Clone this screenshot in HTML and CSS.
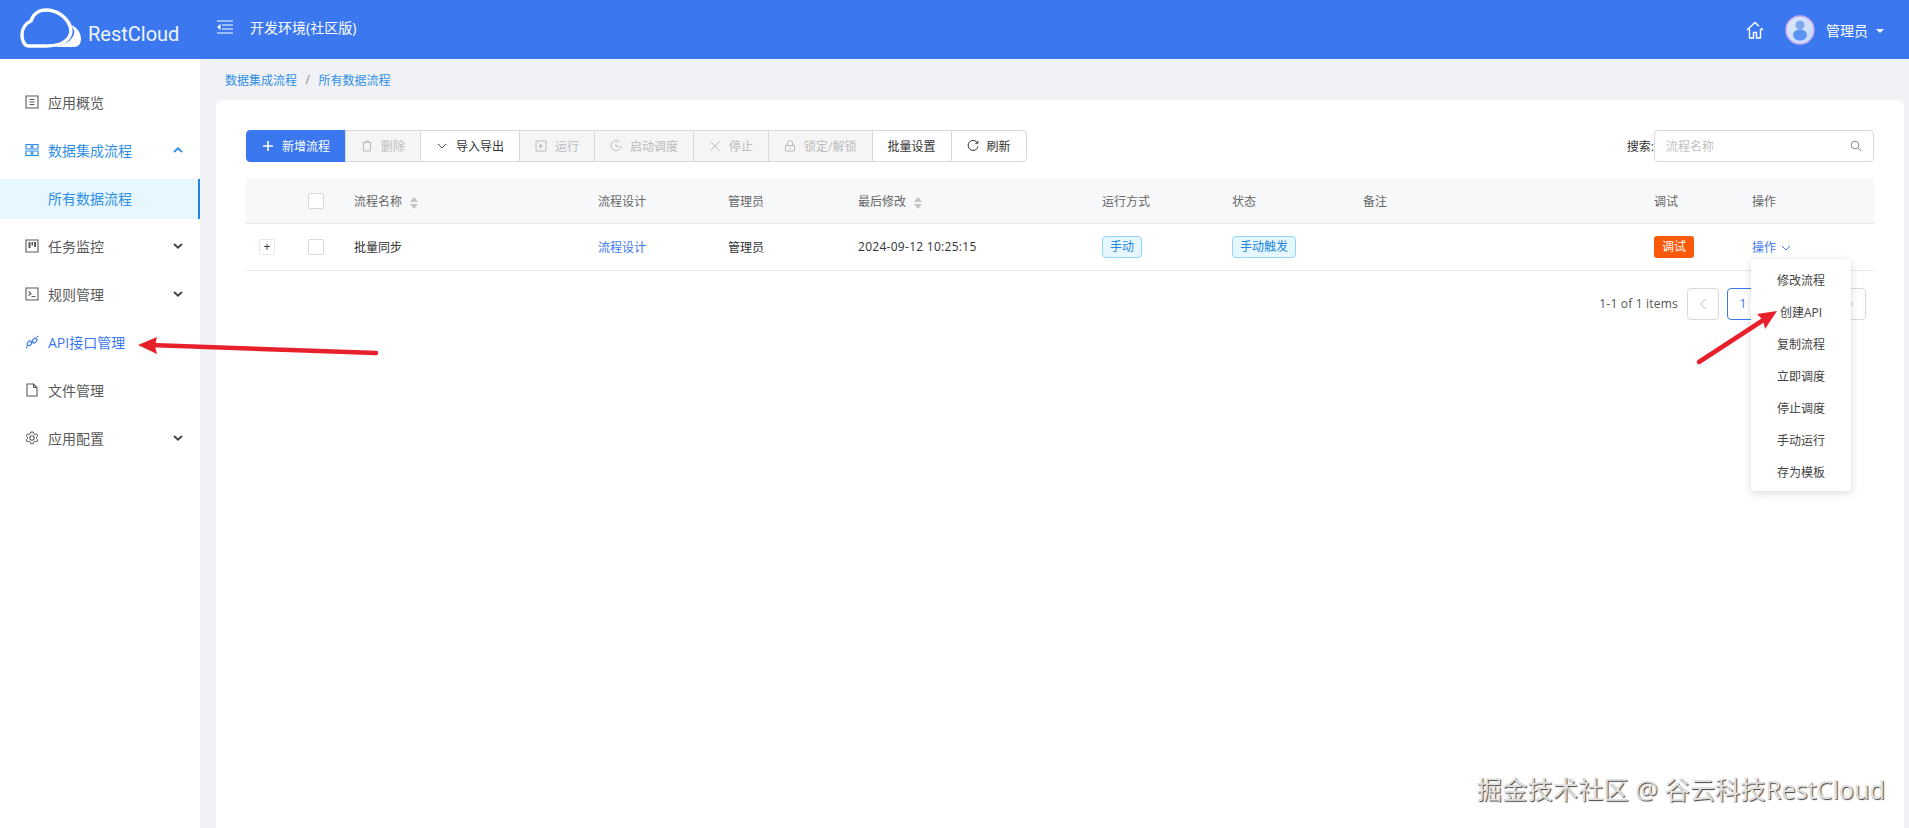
FILE: index.html
```html
<!DOCTYPE html>
<html lang="zh">
<head>
    <meta charset="UTF-8">
    <meta name="viewport" content="width=device-width, initial-scale=1.0">
    <title>RestCloud</title>
    <link rel="stylesheet" href="styles.css">
</head>
<body>
    <header class="header">
        <div class="logo">
            <svg class="logo-mark" viewBox="0 0 62 40">
                <path d="M51 17C57 19 61 25 61 31C61 36 58 39 54 39H33C43 38 52 33 54 26C55 23 53 20 51 17Z" fill="#fff"/>
                <path d="M9 38C4 38 2 32 2 27C2 20 6 15 11 13C13 6 19 2 26 2C36 2 46 8 50 18C53 26 48 33 40 36C34 38 30 38 26 38Z" fill="none" stroke="#fff" stroke-width="3.400"/>
            </svg>
            <span class="logo-text">RestCloud</span>
        </div>
        <svg class="collapse-icon" viewBox="0 0 16 14">
            <path d="M0 1h16M5 5h11M5 9h11M0 13h16" stroke="#fff" stroke-width="1.200" fill="none"/>
            <path d="M3.500 4v6L0 7z" fill="#fff"/>
        </svg>
        <span class="env-name">开发环境(社区版)</span>
        <div class="header-right">
            <svg class="home-icon" viewBox="0 0 18 18">
                <path d="M1 9l8-7.500 4 3.700M15 7l2 2M3.500 8v9h4v-5.500h3V17h4V8" fill="none" stroke="#fff" stroke-width="1.400"/>
            </svg>
            <svg class="avatar" viewBox="0 0 30 30">
                <defs>
                    <linearGradient id="avatarBg" x1="0" y1="0" x2="1" y2="1">
                        <stop offset="0" stop-color="#dfe9fb"/>
                        <stop offset="1" stop-color="#c3d8f9"/>
                    </linearGradient>
                </defs>
                <circle cx="15" cy="15" r="14" fill="url(#avatarBg)" stroke="#c9a6ee" stroke-width="1.400"/>
                <circle cx="15" cy="10" r="4.500" fill="#7fa8ee"/>
                <ellipse cx="15" cy="20" rx="7" ry="5.600" fill="#5b93f5"/>
            </svg>
            <span class="user-name">管理员</span>
            <span class="user-caret"></span>
        </div>
    </header>

    <div class="layout">
        <aside class="sidebar">
            <div class="menu-item">
                <svg class="menu-icon" viewBox="0 0 14 14"><path d="M1 1h12v12H1zM4.500 4.500h5M4.500 7h5M4.500 9.500h5" fill="none" stroke="currentColor" stroke-width="1.100"/></svg>
                <span>应用概览</span>
            </div>
            <div class="menu-item active">
                <svg class="menu-icon" viewBox="0 0 14 14"><path d="M1 1.500h5.200v4.500H1zM7.800 1.500H13v4.500H7.800zM1 8h5.200v4.500H1zM7.800 8H13v4.500H7.800z" fill="none" stroke="currentColor" stroke-width="1.200"/></svg>
                <span>数据集成流程</span>
                <svg class="menu-arrow" viewBox="0 0 10 6"><path d="M1 5l4-3.600L9 5" fill="none" stroke="currentColor" stroke-width="1.900"/></svg>
            </div>
            <div class="menu-item selected"><span>所有数据流程</span></div>
            <div class="menu-item">
                <svg class="menu-icon" viewBox="0 0 14 14"><path d="M1 1h12v12H1z" fill="none" stroke="currentColor" stroke-width="1.100"/><path d="M3.500 3h2v6h-2zM6.500 3h1.500v3.500H6.500zM9 3h2v5H9z" fill="currentColor"/></svg>
                <span>任务监控</span>
                <svg class="menu-arrow" viewBox="0 0 10 6"><path d="M1 1l4 3.600L9 1" fill="none" stroke="currentColor" stroke-width="1.900"/></svg>
            </div>
            <div class="menu-item">
                <svg class="menu-icon" viewBox="0 0 14 14"><path d="M1 1h12v12H1zM3.500 4.500L6 6.500 3.500 8.500M6.500 9.500h4" fill="none" stroke="currentColor" stroke-width="1.100"/></svg>
                <span>规则管理</span>
                <svg class="menu-arrow" viewBox="0 0 10 6"><path d="M1 1l4 3.600L9 1" fill="none" stroke="currentColor" stroke-width="1.900"/></svg>
            </div>
            <div class="menu-item api-item">
                <svg class="menu-icon" viewBox="0 0 14 14">
                    <rect x="1.800" y="6.600" width="5.200" height="3.600" rx="1.800" transform="rotate(-45 4.400 8.400)" fill="none" stroke="currentColor" stroke-width="1.200"/>
                    <rect x="7" y="3.800" width="5.200" height="3.600" rx="1.800" transform="rotate(-45 9.600 5.600)" fill="none" stroke="currentColor" stroke-width="1.200"/>
                    <path d="M5.800 8.200l2.400-2.400M1 13l1.300-1.300M11.700 2.300L13 1" fill="none" stroke="currentColor" stroke-width="1.200"/>
                </svg>
                <span>API接口管理</span>
            </div>
            <div class="menu-item">
                <svg class="menu-icon" viewBox="0 0 14 14"><path d="M2 1h6.500L12 4.500V13H2zM8.500 1v3.500H12" fill="none" stroke="currentColor" stroke-width="1.100"/></svg>
                <span>文件管理</span>
            </div>
            <div class="menu-item">
                <svg class="menu-icon" viewBox="0 0 14 14"><circle cx="7" cy="7" r="2.200" fill="none" stroke="currentColor" stroke-width="1.100"/><path d="M5.800 1h2.400l.4 1.700 1.300.7 1.700-.5 1.200 2-1.300 1.200v1.600l1.300 1.200-1.200 2-1.700-.5-1.300.7-.4 1.700H5.800l-.4-1.700-1.300-.7-1.700.5-1.200-2 1.300-1.200V6.100L1.200 4.900l1.200-2 1.700.5 1.300-.7z" fill="none" stroke="currentColor" stroke-width="1"/></svg>
                <span>应用配置</span>
                <svg class="menu-arrow" viewBox="0 0 10 6"><path d="M1 1l4 3.600L9 1" fill="none" stroke="currentColor" stroke-width="1.900"/></svg>
            </div>
        </aside>

        <main class="main">
            <div class="breadcrumb">
                <a>数据集成流程</a>
                <span class="crumb-sep">/</span>
                <a>所有数据流程</a>
            </div>

            <div class="card">
                <div class="toolbar">
                    <div class="btn-group">
                        <button class="btn primary">
                            <svg class="btn-icon" viewBox="0 0 12 12"><path d="M6 1v10M1 6h10" stroke="currentColor" stroke-width="1.600" fill="none"/></svg>
                            新增流程
                        </button>
                        <button class="btn disabled">
                            <svg class="btn-icon" viewBox="0 0 12 12"><path d="M2.500 2.500h7V11h-7zM4.500 2.500V1h3v1.500M1.500 2.500h9" fill="none" stroke="currentColor"/></svg>
                            删除
                        </button>
                        <button class="btn">
                            <svg class="btn-icon" viewBox="0 0 12 12"><path d="M2 4l4 4 4-4" fill="none" stroke="currentColor" stroke-width=".9"/></svg>
                            导入导出
                        </button>
                        <button class="btn disabled">
                            <svg class="btn-icon" viewBox="0 0 12 12"><path d="M1 1h10v10H1z" fill="none" stroke="currentColor"/><path d="M4.500 3.500L8 6l-3.500 2.500z" fill="currentColor"/></svg>
                            运行
                        </button>
                        <button class="btn disabled">
                            <svg class="btn-icon" viewBox="0 0 12 12"><path d="M10 2.500A5 5 0 1 0 11 6M6 3.500V6.500H8.500" fill="none" stroke="currentColor"/></svg>
                            启动调度
                        </button>
                        <button class="btn disabled">
                            <svg class="btn-icon" viewBox="0 0 12 12"><path d="M1.500 1.500l9 9M10.500 1.500l-9 9" fill="none" stroke="currentColor"/></svg>
                            停止
                        </button>
                        <button class="btn disabled">
                            <svg class="btn-icon" viewBox="0 0 12 12"><path d="M1.500 5.500h9V11h-9zM3.500 5.500V3a2.500 2.500 0 0 1 5 0v2.500M6 7.500v1.500" fill="none" stroke="currentColor"/></svg>
                            锁定/解锁
                        </button>
                        <button class="btn">批量设置</button>
                        <button class="btn">
                            <svg class="btn-icon" viewBox="0 0 12 12"><path d="M10.500 3A5 5 0 1 0 11 6.500M10.800 .8V3.300H8.300" fill="none" stroke="currentColor"/></svg>
                            刷新
                        </button>
                    </div>
                    <div class="search">
                        <label>搜索:</label>
                        <div class="search-box">
                            <span class="search-ph">流程名称</span>
                            <svg class="search-icon" viewBox="0 0 12 12"><circle cx="5" cy="5" r="3.800" fill="none" stroke="currentColor"/><path d="M8 8l3.300 3.300" stroke="currentColor" fill="none"/></svg>
                        </div>
                    </div>
                </div>

                <table class="flow-table">
                    <colgroup>
                        <col class="c-expand"><col class="c-check"><col class="c-name"><col class="c-design"><col class="c-admin">
                        <col class="c-modified"><col class="c-run"><col class="c-status"><col class="c-note"><col class="c-debug"><col class="c-ops">
                    </colgroup>
                    <thead>
                        <tr>
                            <th></th>
                            <th><span class="checkbox"></span></th>
                            <th>流程名称<span class="sort"><i class="up"></i><i class="down"></i></span></th>
                            <th>流程设计</th>
                            <th>管理员</th>
                            <th>最后修改<span class="sort"><i class="up"></i><i class="down"></i></span></th>
                            <th>运行方式</th>
                            <th>状态</th>
                            <th>备注</th>
                            <th>调试</th>
                            <th>操作</th>
                        </tr>
                    </thead>
                    <tbody>
                        <tr>
                            <td class="expand-cell"><span class="expand-btn">+</span></td>
                            <td><span class="checkbox"></span></td>
                            <td>批量同步</td>
                            <td><a class="link">流程设计</a></td>
                            <td>管理员</td>
                            <td class="date-cell">2024-09-12 10:25:15</td>
                            <td><span class="tag">手动</span></td>
                            <td><span class="tag">手动触发</span></td>
                            <td></td>
                            <td><span class="debug-btn">调试</span></td>
                            <td>
                                <a class="link ops-link">操作
                                    <svg class="ops-arrow" viewBox="0 0 10 6"><path d="M1 1l4 4 4-4" fill="none" stroke="currentColor"/></svg>
                                </a>
                            </td>
                        </tr>
                    </tbody>
                </table>

                <div class="pagination">
                    <span class="page-total">1-1 of 1 items</span>
                    <span class="page-btn muted">
                        <svg class="page-arrow" viewBox="0 0 8 12"><path d="M6.500 1L1.500 6l5 5" fill="none" stroke="currentColor"/></svg>
                    </span>
                    <span class="page-btn current">1</span>
                    <span class="page-btn muted page-next">
                        <svg class="page-arrow" viewBox="0 0 8 12"><path d="M1.500 1l5 5-5 5" fill="none" stroke="currentColor"/></svg>
                    </span>
                </div>

                <ul class="dropdown">
                    <li>修改流程</li>
                    <li>创建API</li>
                    <li>复制流程</li>
                    <li>立即调度</li>
                    <li>停止调度</li>
                    <li>手动运行</li>
                    <li>存为模板</li>
                </ul>
            </div>
        </main>
    </div>

    <div class="watermark">掘金技术社区 @ 谷云科技RestCloud</div>

    <!-- red arrows drawn over the screenshot -->
    <svg class="annotations" viewBox="0 0 1909 828">
        <path d="M376 353L150 345" stroke="#e8202c" stroke-width="4.500" stroke-linecap="round" fill="none"/>
        <path d="M138 345L157 337L155 346L157 354z" fill="#e8202c"/>
        <path d="M1699 362L1768 317" stroke="#e8202c" stroke-width="4.500" stroke-linecap="round" fill="none"/>
        <path d="M1777 311L1757 314L1763 320L1765 329z" fill="#e8202c"/>
    </svg>
</body>
</html>
```

FILE: styles.css
```css
* {
    box-sizing: border-box;
}
html, body {
    height: 828px;
    overflow: hidden;
}
body {
    margin: 0;
    position: relative;
    font-family: "Open Sans", "Noto Sans CJK SC", sans-serif;
    font-size: 12px;
    color: #333;
    background-color: #f0f2f5;
}

/* header */
.header {
    height: 59px;
    display: flex;
    align-items: center;
    padding-left: 20px;
    padding-right: 25px;
    background-color: #3b78f0;
    color: #fff;
}
.logo {
    display: flex;
    align-items: flex-end;
    width: 197px;
    margin-bottom: 4px;
}
.logo-mark {
    width: 62px;
    height: 40px;
}
.logo-text {
    margin-left: 6px;
    margin-bottom: 1px;
    font-family: Roboto, sans-serif;
    font-size: 20px;
    line-height: 26px;
    color: #f0f5ff;
}
.collapse-icon {
    width: 16px;
    height: 14px;
    margin-bottom: 6px;
}
.env-name {
    margin-left: 17px;
    margin-bottom: 6px;
    font-size: 14px;
}
.header-right {
    margin-left: auto;
    display: flex;
    align-items: center;
}
.home-icon {
    width: 18px;
    height: 18px;
}
.avatar {
    width: 30px;
    height: 30px;
    margin-left: 21px;
}
.user-name {
    margin-left: 11px;
    font-size: 14px;
}
.user-caret {
    margin-left: 8px;
    margin-top: 2px;
    border-left: 4px solid transparent;
    border-right: 4px solid transparent;
    border-top: 4px solid #fff;
}

/* sidebar */
.layout {
    display: flex;
    height: 769px;
}
.sidebar {
    width: 200px;
    flex: none;
    display: flex;
    flex-direction: column;
    gap: 8px;
    padding-top: 24px;
    background: #fff;
}
.menu-item {
    height: 40px;
    display: flex;
    align-items: center;
    padding-left: 25px;
    padding-bottom: 2px;
    font-size: 14px;
    color: #595959;
}
.menu-icon {
    width: 14px;
    height: 14px;
    margin-right: 9px;
}
.menu-arrow {
    width: 10px;
    height: 6px;
    margin-left: auto;
    margin-right: 17px;
    color: #444;
}
.menu-item.api-item {
    color: #3b78f0;
}
.menu-item.active {
    color: #2f8fe6;
}
.menu-item.active .menu-arrow {
    color: #2f8fe6;
}
.menu-item.selected {
    padding-left: 48px;
    color: #2f8fe6;
    background: #e6f7ff;
    border-right: 2px solid #1f86e0;
}

/* content */
.main {
    flex: 1;
    display: flex;
    flex-direction: column;
    padding: 0 5px 0 16px;
}
.breadcrumb {
    height: 41px;
    display: flex;
    align-items: center;
    padding-left: 9px;
    color: #2f8fe6;
}
.crumb-sep {
    margin: 0 8.500px;
    color: #888;
}
.card {
    flex: 1;
    position: relative;
    padding: 30px 30px 0;
    background: #fff;
    border-radius: 6px 6px 0 0;
}
.toolbar {
    display: flex;
    justify-content: space-between;
    height: 32px;
    margin-bottom: 17px;
}
.btn-group {
    display: flex;
}
.btn {
    height: 32px;
    display: flex;
    align-items: center;
    gap: 8px;
    margin: 0 0 0 -1px;
    padding: 0 15px;
    font-family: inherit;
    font-size: 12px;
    color: #333;
    background: #fff;
    border: 1px solid #d9d9d9;
}
.btn:first-child {
    margin-left: 0;
    border-radius: 4px 0 0 4px;
}
.btn:last-child {
    border-radius: 0 4px 4px 0;
}
.btn.primary {
    color: #fff;
    background: #3b78f0;
    border-color: #3b78f0;
}
.btn.disabled {
    color: #bbb;
    background: #f5f5f5;
}
.btn-icon {
    width: 12px;
    height: 12px;
}
.search {
    display: flex;
    align-items: center;
}
.search-box {
    width: 220px;
    height: 32px;
    display: flex;
    align-items: center;
    justify-content: space-between;
    padding: 0 11px;
    border: 1px solid #d9d9d9;
    border-radius: 4px;
}
.search-ph {
    color: #bfbfbf;
}
.search-icon {
    width: 12px;
    height: 12px;
    color: #888;
}

/* table */
.flow-table {
    width: 1628px;
    table-layout: fixed;
    border-collapse: collapse;
}
.c-expand { width: 46px; }
.c-check { width: 46px; }
.c-name { width: 244px; }
.c-design { width: 130px; }
.c-admin { width: 130px; }
.c-modified { width: 244px; }
.c-run { width: 130px; }
.c-status { width: 131px; }
.c-note { width: 291px; }
.c-debug { width: 98px; }
.c-ops { width: 138px; }
.flow-table th,
.flow-table td {
    padding: 0 0 0 16px;
    text-align: left;
    font-weight: normal;
    border-bottom: 1px solid #e8e8e8;
}
.flow-table th {
    height: 44px;
    color: #666;
    background: #f7f8fa;
}
.flow-table td {
    height: 47px;
}
.flow-table .expand-cell {
    padding-left: 13px;
}
.flow-table .date-cell {
    letter-spacing: .28px;
}
.checkbox {
    display: block;
    width: 16px;
    height: 16px;
    background: #fff;
    border: 1px solid #d9d9d9;
    border-radius: 2px;
}
.expand-btn {
    display: block;
    width: 16px;
    height: 16px;
    line-height: 14px;
    text-align: center;
    background: #fff;
    border: 1px solid #e8e8e8;
    border-radius: 2px;
}
.sort {
    display: inline-flex;
    flex-direction: column;
    gap: 2px;
    margin-left: 8px;
    vertical-align: middle;
}
.sort i {
    border-left: 4px solid transparent;
    border-right: 4px solid transparent;
}
.sort .up {
    border-bottom: 5px solid #c4c4c4;
}
.sort .down {
    border-top: 5px solid #c4c4c4;
}
.link {
    color: #3b78f0;
}
.ops-arrow {
    width: 10px;
    height: 6px;
    margin-left: 2px;
    vertical-align: middle;
}
.tag {
    display: inline-block;
    height: 22px;
    padding: 0 7px;
    line-height: 20px;
    color: #1f86e0;
    background: #e6f7ff;
    border: 1px solid #91d5ff;
    border-radius: 4px;
}
.debug-btn {
    display: inline-block;
    width: 40px;
    height: 22px;
    line-height: 22px;
    text-align: center;
    color: #fff;
    background: #fa5a0a;
    border-radius: 3px;
}

/* pagination */
.pagination {
    display: flex;
    align-items: center;
    justify-content: flex-end;
    gap: 8px;
    margin-top: 17px;
    padding-right: 8px;
}
.page-total {
    margin-right: 1px;
    letter-spacing: .2px;
    color: #555;
}
.page-btn {
    width: 32px;
    height: 32px;
    display: flex;
    align-items: center;
    justify-content: center;
    border: 1px solid #d9d9d9;
    border-radius: 4px;
}
.page-btn.muted {
    color: #bbb;
}
.page-btn.current {
    color: #3b78f0;
    border-color: #3b78f0;
}
.page-next {
    margin-left: 67px;
}
.page-arrow {
    width: 8px;
    height: 12px;
}

/* operations menu */
.dropdown {
    position: absolute;
    top: 159px;
    right: 53px;
    width: 100px;
    margin: 0;
    padding: 6px 0 2px;
    list-style: none;
    background: #fff;
    border-radius: 4px;
    box-shadow: 0 2px 8px rgba(0,0,0,0.15);
}
.dropdown li {
    height: 32px;
    line-height: 32px;
    text-align: center;
    color: #444;
}

/* things lying over the page */
.watermark {
    position: absolute;
    right: 24px;
    top: 771px;
    font-size: 25.3px;
    line-height: 36px;
    white-space: nowrap;
    color: #e0e0e0;
    text-shadow: 1px 1px 1px #444;
}
.annotations {
    position: absolute;
    left: 0;
    top: 0;
    width: 1909px;
    height: 828px;
    pointer-events: none;
}
```
